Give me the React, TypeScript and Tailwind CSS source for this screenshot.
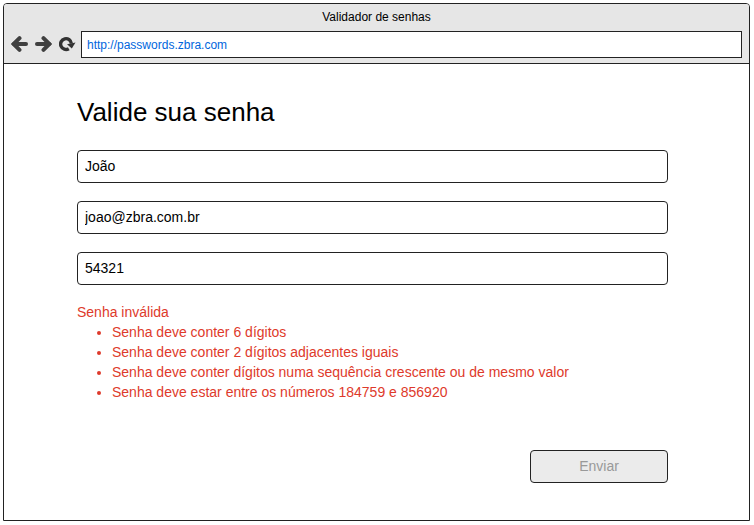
import React, { useState } from "react";

const ERRORS = [
  "Senha deve conter 6 dígitos",
  "Senha deve conter 2 dígitos adjacentes iguais",
  "Senha deve conter dígitos numa sequência crescente ou de mesmo valor",
  "Senha deve estar entre os números 184759 e 856920",
];

function ArrowIcon({ flipped = false }: { flipped?: boolean }) {
  return (
    <svg width="17" height="17" viewBox="0 0 17 17" fill="none" stroke="#404040" strokeWidth="4" aria-hidden="true">
      <g transform={flipped ? "matrix(-1 0 0 1 17 0)" : undefined}>
        <path d="M3 8H15" strokeLinecap="round" />
        <path d="M8.5 2.2L2.7 8L8.5 13.8" strokeLinecap="round" strokeLinejoin="miter" />
      </g>
    </svg>
  );
}

function ReloadIcon() {
  return (
    <svg width="17" height="17" viewBox="0 0 17 17" fill="none" aria-hidden="true">
      <path d="M9.8 12.7A5.4 5.4 0 1 1 12.4 7.6" stroke="#333" strokeWidth="3.4" />
      <path d="M8 8.2L16.5 6.6L12.8 12.6Z" fill="#333" />
    </svg>
  );
}

function Field({ label, type = "text", initial }: { label: string; type?: string; initial: string }) {
  const [value, setValue] = useState(initial);
  return (
    <input
      type={type}
      aria-label={label}
      value={value}
      onChange={(e) => setValue(e.target.value)}
      className="h-[33px] w-full rounded border border-[#222] bg-white px-[7px] pb-[2px] text-sm text-black outline-none"
    />
  );
}

export default function App() {
  const [url, setUrl] = useState("http://passwords.zbra.com");
  return (
    <div className="p-[3px] pr-1 font-['Liberation_Sans',Arial,sans-serif] text-black">
      <div className="overflow-hidden rounded-t border border-[#222] bg-white">
        <header className="border-b border-[#222] bg-[#e6e6e6] pr-[7px] pb-[5px] pl-[7px]">
          <p className="text-center text-xs leading-[27px]">Validador de senhas</p>
          <nav className="flex items-center">
            <div className="mr-[5px] flex gap-[7px]">
              <button type="button" aria-label="Voltar"><ArrowIcon /></button>
              <button type="button" aria-label="Avançar"><ArrowIcon flipped /></button>
              <button type="button" aria-label="Recarregar"><ReloadIcon /></button>
            </div>
            <input
              type="url"
              aria-label="Endereço"
              value={url}
              onChange={(e) => setUrl(e.target.value)}
              className="h-[27px] min-w-0 flex-1 border border-[#222] bg-white px-[5px] text-xs text-[#0066dd] outline-none"
            />
          </nav>
        </header>
        <main className="pt-[30px] pr-[81px] pb-[37px] pl-[73px]">
          <h1 className="text-[26px] leading-9">Valide sua senha</h1>
          <form className="mt-5 flex flex-col" onSubmit={(e) => e.preventDefault()}>
            <div className="flex flex-col gap-[18px]">
              <Field label="Nome" initial="João" />
              <Field label="E-mail" type="email" initial="joao@zbra.com.br" />
              <Field label="Senha" initial="54321" />
            </div>
            <div role="alert" className="mt-[17px] text-sm leading-5 text-[#de3a2b]">
              <p>Senha inválida</p>
              <ul className="list-disc pl-[35px]">
                {ERRORS.map((error) => (
                  <li key={error}>{error}</li>
                ))}
              </ul>
            </div>
            <button
              type="submit"
              disabled
              className="mt-12 h-[33px] w-[138px] self-end rounded border border-[#222] bg-[#ebebeb] pb-[2px] text-sm text-[#999]"
            >
              Enviar
            </button>
          </form>
        </main>
      </div>
    </div>
  );
}
